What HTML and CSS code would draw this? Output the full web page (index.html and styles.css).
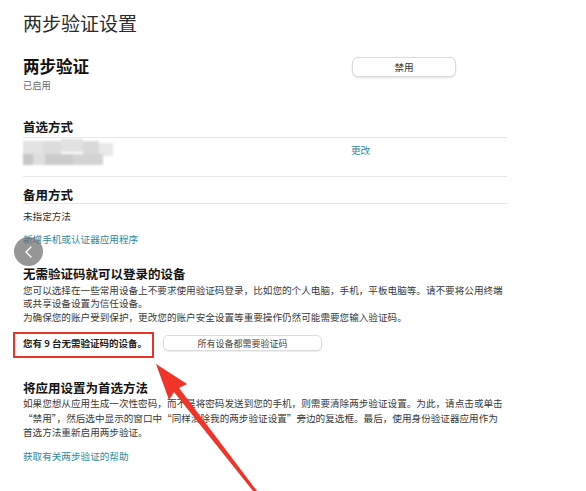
FILE: index.html
```html
<!DOCTYPE html>
<html lang="zh-CN">
<head>
<meta charset="utf-8">
<title>两步验证设置</title>
<link rel="stylesheet" href="styles.css">
</head>
<body>
<main class="page">
  <h1 class="page-title">两步验证设置</h1>

  <section class="status-row">
    <div class="status-info">
      <h2 class="status-title">两步验证</h2>
      <div class="status-state">已启用</div>
    </div>
    <button class="btn btn-main" type="button">禁用</button>
  </section>

  <section class="method">
    <h3 class="section-title ruled">首选方式</h3>
    <div class="method-row ruled">
      <div class="masked" aria-hidden="true">
        <span class="px p1"></span><span class="px p2"></span><span class="px p3"></span><span class="px p4"></span><span class="px p5"></span>
        <span class="px q1"></span><span class="px q2"></span><span class="px q3"></span><span class="px q4"></span>
      </div>
      <a class="link change-link" href="#">更改</a>
    </div>
  </section>

  <section class="method backup">
    <h3 class="section-title ruled thin">备用方式</h3>
    <p class="plain">未指定方法</p>
    <a class="link add-link" href="#">新增手机或认证器应用程序</a>
  </section>

  <section class="trusted">
    <h3 class="section-title">无需验证码就可以登录的设备</h3>
    <p class="body-text">您可以选择在一些常用设备上不要求使用验证码登录，比如您的个人电脑，手机，平板电脑等。请不要将公用终端或共享设备设置为信任设备。</p>
    <p class="body-text second">为确保您的账户受到保护，更改您的账户安全设置等重要操作仍然可能需要您输入验证码。</p>
    <div class="device-row">
      <strong class="device-count">您有 9 台无需验证码的设备。</strong>
      <button class="btn btn-small" type="button">所有设备都需要验证码</button>
    </div>
  </section>

  <section class="app-pref">
    <h3 class="section-title">将应用设置为首选方法</h3>
    <p class="body-text loose">如果您想从应用生成一次性密码，而不是将密码发送到您的手机，则需要清除两步验证设置。为此，请点击或单击“禁用”，然后选中显示的窗口中“同样清除我的两步验证设置”旁边的复选框。最后，使用身份验证器应用作为首选方法重新启用两步验证。</p>
    <a class="link help-link" href="#">获取有关两步验证的帮助</a>
  </section>
</main>

<button class="nav-back" type="button" aria-label="返回">
  <svg width="12" height="14" viewBox="0 0 12 14"><path d="M8 2 L3 7 L8 12" fill="none" stroke="#fff" stroke-width="1.4" stroke-linecap="round" stroke-linejoin="round"/></svg>
</button>

<div class="mark-box"></div>
<svg class="mark-arrow" width="586" height="491" viewBox="0 0 586 491">
  <polygon points="156,364 187,384 179,388 257,491 253,491 174,392 169,400" fill="#f0342a"/>
</svg>
</body>
</html>
```
FILE: styles.css
```css
* { box-sizing: border-box; }

html, body {
  margin: 0;
  background: #fff;
}

body {
  font-family: "Noto Sans CJK SC", "Noto Sans", sans-serif;
  color: #333;
  width: 586px;
  height: 491px;
  overflow: hidden;
  position: relative;
}

.page {
  padding: 11px 0 0 23px;
  width: 507px;
}

.page-title {
  margin: 0;
  font-size: 19px;
  line-height: 24px;
  font-weight: 400;
  color: #2b2b2b;
}

.status-row {
  display: grid;
  grid-template-columns: 329px 104px;
  align-items: start;
  margin-top: 21px;
}

.status-title {
  margin: 0;
  font-size: 16.5px;
  line-height: 20px;
  font-weight: 700;
  color: #111;
}

.status-state {
  margin-top: 3px;
  font-size: 9.3px;
  line-height: 12px;
  color: #6a6a6a;
}

.btn {
  font-family: inherit;
  background: #fff;
  border: 1px solid #dcdcdc;
  color: #333;
  padding: 0;
  cursor: pointer;
}

.btn-main {
  margin-top: 1px;
  height: 20px;
  border-radius: 6px;
  font-size: 9.6px;
  box-shadow: 0 1px 2px rgba(0, 0, 0, 0.12);
}

.section-title {
  margin: 0;
  font-size: 12.5px;
  line-height: 16px;
  font-weight: 700;
  color: #141414;
}

.ruled {
  border-bottom: 1px solid #e6e6e6;
}

.method {
  margin-top: 28px;
}

.method .section-title {
  padding-bottom: 2px;
}

.method-row {
  display: grid;
  grid-template-columns: 328px auto;
  height: 39px;
}

/* pixelated placeholder over the masked phone number */
.masked {
  position: relative;
  height: 39px;
  filter: blur(0.9px);
}

.px {
  position: absolute;
  height: 13px;
}
.p1 { left: 0;  top: 3px;  width: 20px; background: #e3e3e3; }
.p2 { left: 20px; top: 3px; width: 18px; background: #dcdcdc; }
.p3 { left: 38px; top: 1px; width: 22px; background: #e1e1e1; }
.p4 { left: 60px; top: 3px; width: 16px; background: #d9d9d9; }
.p5 { left: 76px; top: 5px; width: 14px; background: #e8e8e8; }
.q1 { left: 0;  top: 16px; width: 10px; background: #c6c6c6; height: 11px; }
.q2 { left: 10px; top: 16px; width: 12px; background: #dedede; height: 11px; }
.q3 { left: 22px; top: 16px; width: 28px; background: #cbcbcb; height: 11px; }
.q4 { left: 50px; top: 16px; width: 30px; background: #d3d3d3; height: 11px; }

.link {
  color: #2f8a9b;
  text-decoration: none;
  font-size: 9.6px;
  line-height: 12px;
}

.change-link {
  margin-top: 6px;
}

.backup {
  margin-top: 10px;
}

.backup .section-title.thin {
  padding-bottom: 0;
}

.plain {
  margin: 6px 0 0;
  font-size: 9.6px;
  line-height: 12px;
  color: #333;
}

.add-link {
  display: block;
  margin-top: 11px;
}

.trusted {
  margin-top: 21px;
}

.body-text {
  margin: 2px 0 0;
  font-size: 9.6px;
  line-height: 12.8px;
  color: #3a3a3a;
}

.body-text.second {
  margin-top: 1px;
}

.device-row {
  display: flex;
  align-items: center;
  height: 26px;
  margin-top: 7px;
}

.device-count {
  font-size: 9.5px;
  font-weight: 700;
  color: #222;
  width: 140px;
}

.btn-small {
  height: 16px;
  width: 159px;
  border-radius: 5px;
  font-size: 9px;
  color: #444;
  box-shadow: 0 1px 1px rgba(0, 0, 0, 0.08);
}

.app-pref {
  margin-top: 24px;
}

.body-text.loose {
  margin-top: 0;
  line-height: 14.5px;
}

.help-link {
  display: block;
  margin-top: 10px;
}

/* floating back control from the viewer */
.nav-back {
  position: absolute;
  left: 14px;
  top: 237px;
  width: 29px;
  height: 29px;
  border-radius: 50%;
  border: 0;
  padding: 0;
  background: rgba(110, 110, 110, 0.72);
  display: flex;
  align-items: center;
  justify-content: center;
}

/* red annotation marks */
.mark-box {
  position: absolute;
  left: 13px;
  top: 332px;
  width: 141px;
  height: 26px;
  border: 2px solid #e8352c;
}

.mark-arrow {
  position: absolute;
  left: 0;
  top: 0;
  pointer-events: none;
}
```
